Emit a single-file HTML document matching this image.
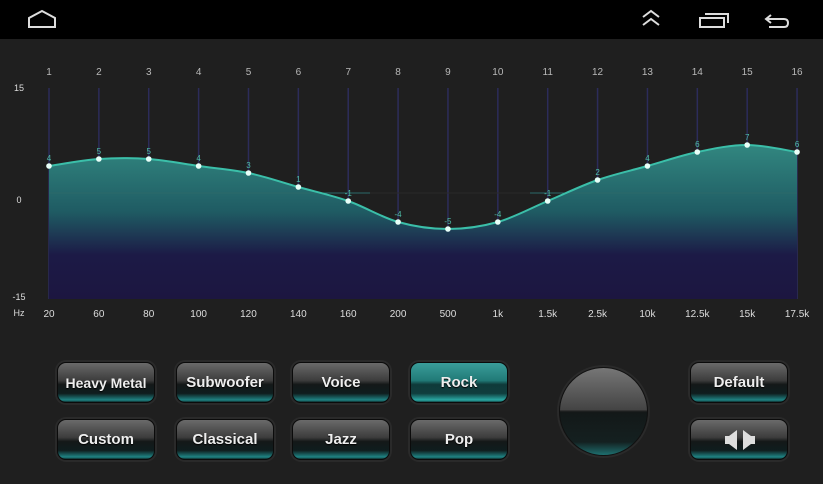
<!DOCTYPE html>
<html><head><meta charset="utf-8"><style>
*{margin:0;padding:0;box-sizing:border-box}
body{width:823px;height:484px;background:#1f1f1f;overflow:hidden;position:relative;font-family:"Liberation Sans",sans-serif}
.top{position:absolute;left:0;top:0;width:823px;height:39px;background:#000}
.btn{position:absolute;width:98px;height:41px;border-radius:9px;border:1px solid #0b0b0b;box-shadow:0 0 0 2px #2a2a2a;
background:linear-gradient(#6a6a6a 0%,#3c3c3c 45%,#141818 55%,#0f1d1e 78%,#1f8585 95%,#0e2a2a 100%);
color:#eee;font-size:15px;font-weight:bold;text-align:center;line-height:40px;text-shadow:0 1px 1px #000}
.btn.on{background:linear-gradient(#3a9d9a 0%,#217a77 45%,#0f3a3a 55%,#103e3e 78%,#2aaaa5 95%,#124040 100%)}
</style></head><body>
<div class="top">
<svg width="823" height="39" style="position:absolute;left:0;top:0" fill="none" stroke="#ddd" stroke-width="2">
<path d="M29 27 L29 18 L42 11 L55 18 L55 27 Z"/>
<path d="M643 17 L651 11 L659 17 M643 25 L651 19 L659 25"/>
<path d="M700 18 H724 V27 H700 Z M705 14 H728 V23"/>
<path d="M771 15 L766 19 L771 23 M766 19 H784 Q788 19 788 23 Q788 27 784 27 H769"/>
</svg>
</div>
<svg id="g" width="823" height="330" style="position:absolute;left:0;top:0">
<defs>
<linearGradient id="f" gradientUnits="userSpaceOnUse" x1="0" y1="140" x2="0" y2="300">
<stop offset="0" stop-color="#338a82"/><stop offset="0.45" stop-color="#1f5b63"/><stop offset="0.72" stop-color="#1c1a46"/><stop offset="1" stop-color="#1c1640"/>
</linearGradient>
</defs>
<g id="lines"></g>
<path id="fill" fill="url(#f)"/>
<line x1="49" y1="193" x2="797" y2="193" stroke="#2b6868" stroke-width="1"/>
<line x1="370" y1="193" x2="530" y2="193" stroke="#2a2a2a" stroke-width="1"/>
<path id="curve" fill="none" stroke="#3bbfa9" stroke-width="2"/>
<g id="dots"></g>
<g id="txt" font-family="Liberation Sans" font-size="10" fill="#b8b8b8" text-anchor="middle"></g>
<text x="19" y="91" font-size="9" fill="#ddd" text-anchor="middle">15</text>
<text x="19" y="203" font-size="9" fill="#ddd" text-anchor="middle">0</text>
<text x="19" y="300" font-size="9" fill="#ddd" text-anchor="middle">-15</text>
<text x="19" y="316" font-size="9" fill="#ddd" text-anchor="middle">Hz</text>
</svg>
<script>
var v=[4,5,5,4,3,1,-1,-4,-5,-4,-1,2,4,6,7,6],hz=["20","60","80","100","120","140","160","200","500","1k","1.5k","2.5k","10k","12.5k","15k","17.5k"];
var P=v.map(function(a,i){return [49+i*49.87,194-7*a]});
var d="M"+P[0][0]+" "+P[0][1];
for(var i=0;i<P.length-1;i++){var p0=P[Math.max(0,i-1)],p1=P[i],p2=P[i+1],p3=P[Math.min(P.length-1,i+2)];
d+=" C"+(p1[0]+(p2[0]-p0[0])/6)+" "+(p1[1]+(p2[1]-p0[1])/6)+" "+(p2[0]-(p3[0]-p1[0])/6)+" "+(p2[1]-(p3[1]-p1[1])/6)+" "+p2[0]+" "+p2[1];}
document.getElementById("curve").setAttribute("d",d);
document.getElementById("fill").setAttribute("d",d+" L797 299 L49 299 Z");
var L="",D="",T="";
P.forEach(function(p,i){
L+='<line x1="'+p[0]+'" y1="88" x2="'+p[0]+'" y2="299" stroke="#2c2c5a" stroke-width="1.5"/>';
D+='<circle cx="'+p[0]+'" cy="'+p[1]+'" r="2.8" fill="#e8fff8"/>';
T+='<text x="'+p[0]+'" y="75">'+(i+1)+'</text><text x="'+p[0]+'" y="'+(p[1]-5)+'" font-size="8" fill="#4fbfa8">'+v[i]+'</text><text x="'+p[0]+'" y="317" fill="#ddd">'+hz[i]+'</text>';});
document.getElementById("lines").innerHTML=L;document.getElementById("dots").innerHTML=D;document.getElementById("txt").innerHTML=T;
</script>
<div class="btn" style="left:57px;top:362px;font-size:14px">Heavy Metal</div>
<div class="btn" style="left:176px;top:362px">Subwoofer</div>
<div class="btn" style="left:292px;top:362px">Voice</div>
<div class="btn on" style="left:410px;top:362px">Rock</div>
<div class="btn" style="left:57px;top:419px">Custom</div>
<div class="btn" style="left:176px;top:419px">Classical</div>
<div class="btn" style="left:292px;top:419px">Jazz</div>
<div class="btn" style="left:410px;top:419px">Pop</div>
<div class="btn" style="left:690px;top:362px">Default</div>
<div class="btn" style="left:690px;top:419px">
<svg width="40" height="22" style="position:absolute;left:29px;top:9px"><path d="M5 7h4l8-6v20l-8-6h-4z M35 7h-4l-8-6v20l8-6h4z" fill="#ddd"/></svg></div>
<div style="position:absolute;left:559px;top:367px;width:89px;height:89px;border-radius:50%;border:1px solid #111;
background:linear-gradient(#767676 0%,#444 48%,#222 49.5%,#131818 51%,#142020 85%,#1e7070 100%);box-shadow:0 0 0 2px #2a2a2a"></div>
</body></html>
